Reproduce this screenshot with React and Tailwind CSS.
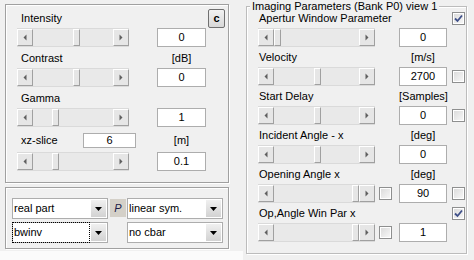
import React from "react";

const FONT = "font-['Liberation_Sans',Arial,sans-serif]";

function Arrow({ dir }) {
  return (
    <svg width="4" height="7" viewBox="0 0 4 7">
      {dir === "left" ? (
        <path d="M3.5 0.5V6.5L0.5 3.5Z" fill="#5f5f5f" />
      ) : (
        <path d="M0.5 0.5V6.5L3.5 3.5Z" fill="#5f5f5f" />
      )}
    </svg>
  );
}

function ScrollBtn({ dir }) {
  return (
    <div className="w-[16px] h-full flex items-center justify-center bg-[#e6e6e6] border border-white border-r-[#a0a0a0] border-b-[#a0a0a0]">
      <Arrow dir={dir} />
    </div>
  );
}

// pre = width of the track left of the thumb
function Slider({ w, pre }) {
  return (
    <div className={`flex h-[19px] ${w} bg-[#e9e9e9] border-t border-b border-[#dadada]`}>
      <ScrollBtn dir="left" />
      <div className={pre} />
      <div className="w-[7px] h-full bg-[#e6e6e6] border border-white border-r-[#a0a0a0] border-b-[#a0a0a0]" />
      <div className="flex-1" />
      <ScrollBtn dir="right" />
    </div>
  );
}

function Edit({ w = "w-[49px]", h = "h-[19px]", children }) {
  return (
    <div className={`${w} ${h} bg-white border border-[#adadad] flex items-center justify-center`}>
      {children}
    </div>
  );
}

function Check({ on }) {
  return (
    <div className="w-[13px] h-[13px] border border-[#8e8f8f] bg-white p-[1px]">
      <div className="w-full h-full bg-gradient-to-br from-[#dcdcdc] to-[#f6f6f6] flex items-center justify-center">
        {on && (
          <svg width="9" height="9" viewBox="0 0 9 9">
            <path d="M1 4.5L3.5 7L8 1.5" stroke="#3f5089" strokeWidth="1.8" fill="none" />
          </svg>
        )}
      </div>
    </div>
  );
}

function Drop({ label, focus }) {
  return (
    <div className="w-[96px] h-[21px] bg-white border border-[#adadad] flex">
      <div className={`flex-1 flex items-center pl-[1px] ${focus ? "border border-dotted border-black -ml-px -my-px" : ""}`}>
        {label}
      </div>
      <div className="w-[15px] m-[1px] bg-gradient-to-b from-[#f0f0f0] to-[#d2d2d2] flex items-center justify-center">
        <svg width="7" height="4" viewBox="0 0 7 4">
          <path d="M0 0H7L3.5 4Z" fill="#000" />
        </svg>
      </div>
    </div>
  );
}

function LeftRow({ label, unit, right }) {
  return (
    <div className="flex items-center h-[20px]">
      <div className="w-[151px] pl-[15px]">{label}</div>
      <div className="w-[49px] text-center">{unit}</div>
      {right}
    </div>
  );
}

function LeftSlider({ pre, value }) {
  return (
    <div className="flex h-[19px]">
      <div className="ml-[11px]">
        <Slider w="w-[112px]" pre={pre} />
      </div>
      <div className="ml-[28px]">
        <Edit>{value}</Edit>
      </div>
    </div>
  );
}

function RightLabel({ label, unit, check }) {
  return (
    <div className="flex items-center h-[20px]">
      <div className="w-[152px] pl-[12px]">{label}</div>
      <div className="w-[48px] text-center">{unit}</div>
      {check !== undefined && (
        <div className="ml-[5px]">
          <Check on={check} />
        </div>
      )}
    </div>
  );
}

function RightSlider({ pre, value, mid, check }) {
  return (
    <div className="flex items-center h-[19px]">
      <div className="ml-[11px]">
        <Slider w="w-[117px]" pre={pre} />
      </div>
      {mid ? (
        <>
          <div className="ml-[4px]">
            <Check />
          </div>
          <div className="ml-[7px]">
            <Edit w="w-[48px]">{value}</Edit>
          </div>
        </>
      ) : (
        <div className="ml-[24px]">
          <Edit w="w-[48px]">{value}</Edit>
        </div>
      )}
      {check !== undefined && (
        <div className="ml-[5px]">
          <Check on={check} />
        </div>
      )}
    </div>
  );
}

export default function App() {
  return (
    <div className={`w-[474px] h-[260px] flex bg-[#f0f0f0] text-black text-[11px] leading-[13px] ${FONT} overflow-hidden`}>
      {/* left figure area */}
      <div className="w-[243px] flex flex-col">
        <div className="h-[251px] pt-[4px] pl-[5px]">
          <div className="w-[224px] h-[179px] border border-[#a0a0a0] shadow-[inset_1px_1px_0_#fff,1px_1px_0_#fff] pt-[3px]">
            <div className="flex h-[20px]">
              <div className="flex-1 pl-[15px] flex items-center">Intensity</div>
              <div className="w-[17px] h-[19px] mt-[1px] mr-[3px] rounded-[2px] border border-[#707070] bg-gradient-to-b from-[#f2f2f2] to-[#d8d8d8] flex items-center justify-center font-bold">
                c
              </div>
            </div>
            <LeftSlider pre="w-[40px]" value="0" />
            <div className="mt-[1px]">
              <LeftRow label="Contrast" unit="[dB]" />
            </div>
            <LeftSlider pre="w-[40px]" value="0" />
            <div className="mt-[1px]">
              <LeftRow label="Gamma" />
            </div>
            <LeftSlider pre="w-[19px]" value="1" />
            <div className="mt-[1px] flex items-center h-[24px]">
              <div className="w-[77px] pl-[15px]">xz-slice</div>
              <Edit w="w-[53px]" h="h-[15px]">6</Edit>
              <div className="ml-[21px] w-[49px] text-center">[m]</div>
            </div>
            <LeftSlider pre="w-[19px]" value="0.1" />
          </div>

          <div className="mt-[4px] w-[224px] h-[62px] border border-[#a0a0a0] shadow-[inset_1px_1px_0_#fff,1px_1px_0_#fff] pt-[10px] pl-[6px]">
            <div className="flex">
              <Drop label="real part" />
              <div className="ml-[2px] mt-[1px] w-[16px] h-[18px] bg-[#d4d0c8] flex items-center justify-center italic text-[#1c1c48]">
                P
              </div>
              <div className="ml-[1px]">
                <Drop label="linear sym." />
              </div>
            </div>
            <div className="flex mt-[3px]">
              <Drop label="bwinv" focus />
              <div className="ml-[19px]">
                <Drop label="no cbar" />
              </div>
            </div>
          </div>
        </div>
        <div className="flex-1 bg-[#fbfbfb]" />
      </div>

      {/* right: imaging parameters group */}
      <div className="flex-1 pl-[3px] pt-[6px]">
        <div className="w-[221px] h-[248px] border border-[#bcbcbc] shadow-[inset_1px_1px_0_#fff,1px_1px_0_#fff]">
          <div className="-mt-[7px] -mb-[5px] ml-[3px] h-[13px] w-fit px-[2px] bg-[#f0f0f0]">
            Imaging Parameters (Bank P0) view 1
          </div>
          <RightLabel label="Apertur Window Parameter" check={true} />
          <RightSlider pre="w-0" value="0" />
          <RightLabel label="Velocity" unit="[m/s]" />
          <RightSlider pre="w-[40px]" value="2700" check={false} />
          <RightLabel label="Start Delay" unit="[Samples]" />
          <RightSlider pre="w-[40px]" value="0" check={false} />
          <RightLabel label="Incident Angle - x" unit="[deg]" />
          <RightSlider pre="w-[40px]" value="0" />
          <RightLabel label="Opening Angle x" unit="[deg]" />
          <RightSlider pre="w-[78px]" value="90" mid check={false} />
          <RightLabel label="Op,Angle Win Par x" check={true} />
          <RightSlider pre="w-[78px]" value="1" mid />
        </div>
      </div>
    </div>
  );
}
